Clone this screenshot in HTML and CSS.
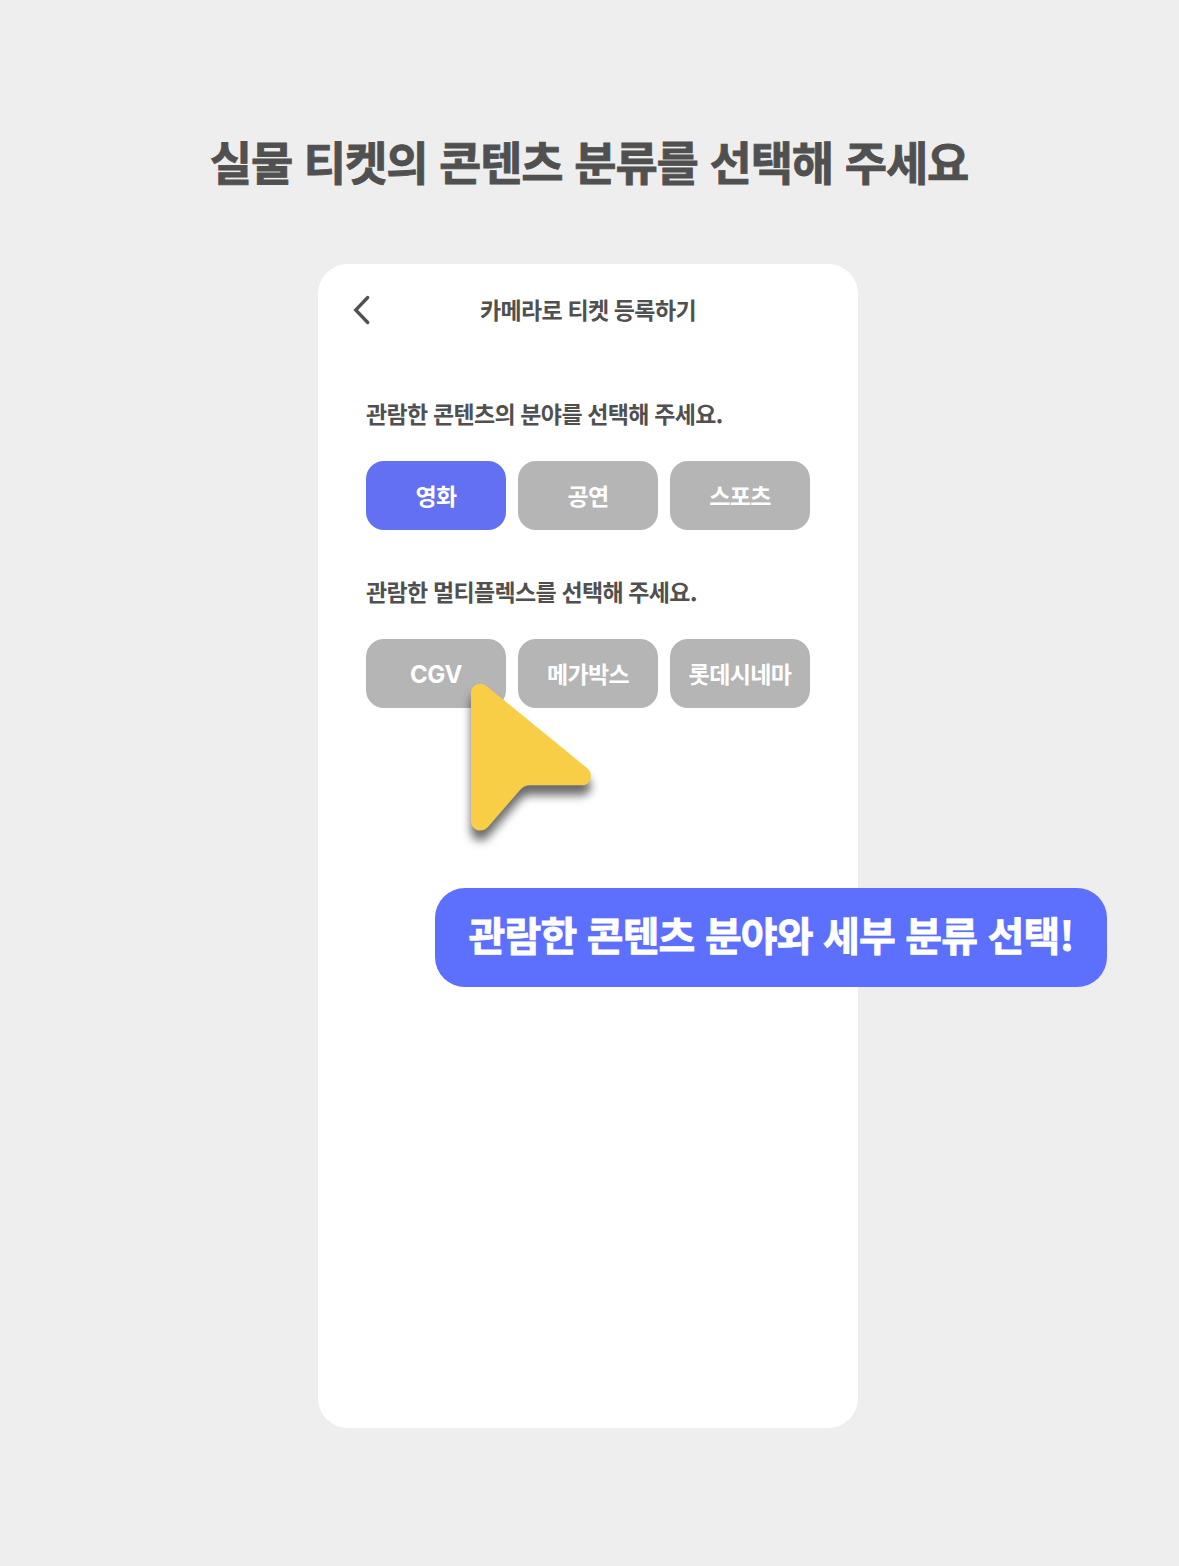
FILE: index.html
```html
<!DOCTYPE html>
<html lang="ko">
<head>
<meta charset="utf-8">
<title>티켓 등록</title>
<link rel="stylesheet" href="styles.css">
</head>
<body>
<main class="page">
  <h1 class="headline"><span>실물 티켓의 콘텐츠 분류를 선택해 주세요</span></h1>
  <section class="phone">
    <header class="topbar">
      <svg class="back" width="20" height="32" viewBox="0 0 20 32"><path d="M15.700 3.500L3.700 16L15.700 28.500" fill="none" stroke="#505050" stroke-width="3.300" stroke-linecap="round" stroke-linejoin="miter"/></svg>
      <h2 class="title">카메라로 티켓 등록하기</h2>
    </header>
    <div class="group">
      <p class="question">관람한 콘텐츠의 분야를 선택해 주세요.</p>
      <div class="options">
        <button class="option selected">영화</button>
        <button class="option">공연</button>
        <button class="option">스포츠</button>
      </div>
    </div>
    <div class="group">
      <p class="question">관람한 멀티플렉스를 선택해 주세요.</p>
      <div class="options">
        <button class="option latin">CGV</button>
        <button class="option">메가박스</button>
        <button class="option">롯데시네마</button>
      </div>
    </div>
    <svg class="cursor" width="160" height="190" viewBox="450 670 160 190"><path d="M471 693C471 685 480 681 486.500 686L587.500 768.500C594 774 590.500 785.300 582.500 785.300H530C526 785.300 522.500 787 520 790L488 827C482 834 471 830 471 821Z" fill="#f8ce46"/></svg>
    <div class="callout"><span>관람한 콘텐츠 분야와 세부 분류 선택!</span></div>
  </section>
</main>
</body>
</html>
```
FILE: styles.css
```css
* { box-sizing: border-box; }
body {
  margin: 0;
  background: #eee;
  color: #505050;
  font-family: "Noto Sans CJK KR", sans-serif;
  font-weight: 700;
}
.page {
  display: flex;
  flex-direction: column;
  align-items: center;
  height: 1566px;
  padding-top: 120px;
}
.headline {
  margin: 0 1px 64px 0;
  height: 80px;
  font-size: 46px;
  line-height: 80px;
  letter-spacing: -1.15px;
  white-space: nowrap;
  -webkit-text-stroke: .8px currentColor;
}
.phone {
  position: relative;
  width: 540px;
  height: 1164px;
  margin-right: 3px;
  padding: 0 48px;
  border-radius: 30px;
  background: #fff;
}
.topbar {
  display: flex;
  align-items: center;
  height: 92px;
  margin: 0 -48px 37px;
  padding: 0 34px;
}
.title {
  flex: 1;
  margin: 0 20px 2px 0;
  font-size: 23px;
  line-height: 32px;
  letter-spacing: -.63px;
  word-spacing: -.5px;
  text-align: center;
}
.group { margin-bottom: 41px; }
.question {
  margin: 0 0 27.500px;
  font-size: 23px;
  line-height: 40px;
  letter-spacing: -.63px;
  word-spacing: -.5px;
  white-space: nowrap;
}
.options { display: flex; gap: 12px; }
.option {
  flex: none;
  width: 140px;
  height: 69.500px;
  padding: 0 0 1px;
  border: 0;
  border-radius: 18px;
  background: #b5b5b5;
  color: #fff;
  font: 700 23px/68px "Noto Sans CJK KR", sans-serif;
  letter-spacing: -.6px;
}
.selected { background: #6270f1; }
.latin {
  padding: 2px 0 0;
  font-family: Inter, sans-serif;
  font-size: 24px;
  line-height: 67px;
  letter-spacing: -.3px;
}
.cursor {
  position: absolute;
  left: 132px;
  top: 406px;
  filter: drop-shadow(0 10px 5px rgba(0, 0, 0, .58));
}
.callout {
  position: absolute;
  left: 117px;
  top: 624px;
  width: 672px;
  height: 99px;
  border-radius: 30px;
  background: #5c70fd;
  color: #fff;
  font-size: 40px;
  line-height: 92px;
  letter-spacing: -.85px;
  text-align: center;
  white-space: nowrap;
  -webkit-text-stroke: .8px currentColor;
}
```
